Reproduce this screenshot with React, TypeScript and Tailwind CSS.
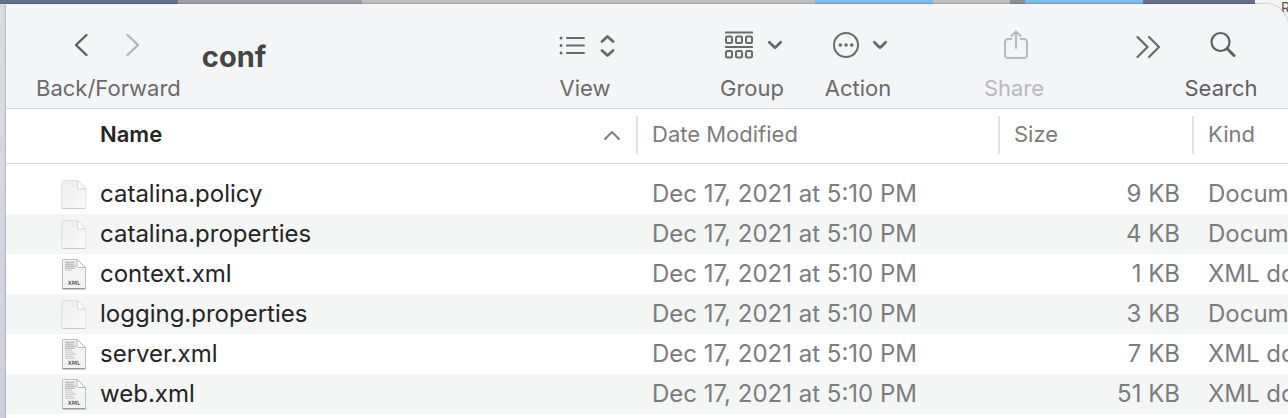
import React, { useState } from 'react';

type FileEntry = {
  name: string;
  size: string;
  type: 'plain' | 'xml';
  lines: number;
};

const files: FileEntry[] = [
  { name: 'catalina.policy', size: '9 KB', type: 'plain', lines: 0 },
  { name: 'catalina.properties', size: '4 KB', type: 'plain', lines: 0 },
  { name: 'context.xml', size: '1 KB', type: 'xml', lines: 5 },
  { name: 'logging.properties', size: '3 KB', type: 'plain', lines: 0 },
  { name: 'server.xml', size: '7 KB', type: 'xml', lines: 9 },
  { name: 'web.xml', size: '51 KB', type: 'xml', lines: 9 },
];

const lineWidths = [10, 9, 11, 10, 7, 9, 11, 8, 10];

function PlainFileIcon() {
  return (
    <svg width="28" height="32" viewBox="0 0 28 32" aria-hidden="true">
      <defs>
        <linearGradient id="plainPage" x1="0" y1="0" x2="1" y2="1">
          <stop offset="0" stopColor="#ececec" />
          <stop offset="1" stopColor="#fafafa" />
        </linearGradient>
      </defs>
      <path d="M3.5 2.5H17.5L26 11V28Q26 30.5 23.5 30.5H3.5Q1.5 30.5 1.5 28.5V4.5Q1.5 2.5 3.5 2.5Z" fill="url(#plainPage)" stroke="#e2e2e2" />
      <path d="M2.5 30.5H25" stroke="#cacaca" />
      <path d="M17.5 2.5V9.5Q17.5 11 19 11H26Z" fill="#fdfdfd" stroke="#d6d6d6" strokeLinejoin="round" />
    </svg>
  );
}

function XmlFileIcon({ lines }: { lines: number }) {
  return (
    <svg width="28" height="32" viewBox="0 0 28 32" aria-hidden="true">
      <path d="M3 1.5H17.5L25.5 9.5V30.5H2.5V2Z" fill="#f4f4f4" stroke="#c0c0c0" />
      <path d="M2.5 30.8H25.5" stroke="#8c8c8c" strokeWidth="1.2" />
      {lineWidths.slice(0, lines).map((width, i) => (
        <path key={i} d={`M5 ${4.2 + i * 2}h${width}`} stroke={i > 3 ? '#d0d0d0' : '#b4b4b4'} strokeWidth="1.2" />
      ))}
      <path d="M17 1.5V8Q17 9.5 18.5 9.5H25.5Z" fill="#fff" stroke="#b8b8b8" strokeLinejoin="round" />
      <text x="14" y="27.3" textAnchor="middle" fontSize="6" fontWeight="500" fontFamily="'DejaVu Sans', sans-serif" fill="#222">
        XML
      </text>
    </svg>
  );
}

function Chevron() {
  return (
    <svg width="16" height="10" viewBox="0 0 16 10" fill="none" stroke="currentColor" strokeWidth="2.8" strokeLinecap="round" strokeLinejoin="round" aria-hidden="true">
      <path d="M2.3 2.3 8 7.8l5.7-5.5" />
    </svg>
  );
}

function ToolbarButton({
  label,
  className,
  disabled,
  children,
}: {
  label: string;
  className: string;
  disabled?: boolean;
  children: React.ReactNode;
}) {
  return (
    <button type="button" disabled={disabled} className={`flex shrink-0 flex-col items-center gap-[11px] ${className}`}>
      <span className="flex h-9 items-center justify-center pl-[3px]">{children}</span>
      <span className="text-[22px] leading-7">{label}</span>
    </button>
  );
}

function Toolbar() {
  return (
    <header className="flex items-start border-b border-[#d9d9d9] bg-[#f4f5f7] pt-[23px] pr-[31px] pb-1.5 pl-[30px] text-[#696a6c]">
      <div className="flex shrink-0 flex-col items-center gap-[11px]">
        <div className="flex h-9 items-center justify-center gap-5 pr-[3px]">
          <button type="button" aria-label="Back" className="flex h-9 w-8 items-center justify-center">
            <svg width="16" height="26" viewBox="0 0 16 26" fill="none" stroke="#5c5d5f" strokeWidth="2.4" strokeLinecap="round" strokeLinejoin="round">
              <path d="M13.5 3 3 13l10.5 10" />
            </svg>
          </button>
          <button type="button" aria-label="Forward" disabled className="flex h-9 w-8 items-center justify-center">
            <svg width="16" height="26" viewBox="0 0 16 26" fill="none" stroke="#b4b5b7" strokeWidth="2.4" strokeLinecap="round" strokeLinejoin="round">
              <path d="M2.5 3 13 13 2.5 23" />
            </svg>
          </button>
        </div>
        <span className="text-[22px] leading-7">Back/Forward</span>
      </div>

      <h1 className="min-w-0 flex-1 truncate pt-2.5 pl-[21px] text-[29px] leading-10 font-bold text-[#454545]">conf</h1>

      <ToolbarButton label="View" className="w-20">
        <svg width="58" height="26" viewBox="0 0 58 26" fill="none" stroke="currentColor" strokeLinecap="round" strokeLinejoin="round" aria-hidden="true">
          <path d="M9 6h17M9 13.5h17M9 21h17" strokeWidth="2" />
          <path d="M3 6h.01M3 13.5h.01M3 21h.01" strokeWidth="3" />
          <path d="M44 9.5 49.5 4.5 55 9.5M44 18.5l5.500 5 5.500-5" strokeWidth="2.8" />
        </svg>
      </ToolbarButton>

      <ToolbarButton label="Group" className="ml-[87px] w-20">
        <span className="flex items-center gap-3.5">
          <svg width="28" height="30" viewBox="0 0 28 30" fill="none" stroke="currentColor" strokeWidth="2" aria-hidden="true">
            <path d="M0.500 2.500h27M0.500 17h27" strokeWidth="1.8" strokeLinecap="round" />
            <rect x="1" y="6.500" width="6" height="6.500" rx="1.500" />
            <rect x="11" y="6.500" width="6" height="6.500" rx="1.500" />
            <rect x="21" y="6.500" width="6" height="6.500" rx="1.500" />
            <rect x="1" y="21" width="6" height="6.500" rx="1.500" />
            <rect x="11" y="21" width="6" height="6.500" rx="1.500" />
            <rect x="21" y="21" width="6" height="6.500" rx="1.500" />
          </svg>
          <Chevron />
        </span>
      </ToolbarButton>

      <ToolbarButton label="Action" className="ml-[26px] w-20">
        <span className="flex items-center gap-3">
          <svg width="28" height="28" viewBox="0 0 28 28" fill="none" stroke="currentColor" aria-hidden="true">
            <circle cx="14" cy="14" r="12" strokeWidth="2" />
            <path d="M8.3 14h.01M14 14h.01M19.7 14h.01" strokeWidth="3.6" strokeLinecap="round" />
          </svg>
          <Chevron />
        </span>
      </ToolbarButton>

      <ToolbarButton label="Share" disabled className="ml-[76px] w-20 text-[#b9babc]">
        <svg width="26" height="32" viewBox="0 0 26 32" fill="none" stroke="currentColor" strokeWidth="2" strokeLinecap="round" strokeLinejoin="round" aria-hidden="true">
          <path d="M8.5 10H5Q2 10 2 13v13q0 3 3 3h16q3 0 3-3V13q0-3-3-3h-3.5" />
          <path d="M13 19V3M8.5 7 13 2.5l4.5 4.5" />
        </svg>
      </ToolbarButton>

      <button type="button" aria-label="More toolbar items" className="ml-[73px] flex h-10 w-10 shrink-0 items-center justify-center pl-0.5">
        <svg width="26" height="26" viewBox="0 0 26 26" fill="none" stroke="currentColor" strokeWidth="2.2" strokeLinecap="round" strokeLinejoin="round">
          <path d="M2.5 3 12.5 13 2.5 23M14 3l10 10-10 10" />
        </svg>
      </button>

      <ToolbarButton label="Search" className="ml-[18px] w-[72px] text-[#5f6062]">
        <svg width="28" height="28" viewBox="0 0 28 28" fill="none" stroke="currentColor" strokeLinecap="round" aria-hidden="true">
          <circle cx="11.5" cy="11" r="9" strokeWidth="2.2" />
          <path d="m18.5 18 6.5 6.5" strokeWidth="3" />
        </svg>
      </ToolbarButton>
    </header>
  );
}

function HeaderCell({ label }: { label: string }) {
  return (
    <th scope="col" className="p-0 pt-[7px] pb-[9px] text-left align-top font-normal">
      <div className="-ml-px flex h-[38px] items-center border-l-2 border-[#e2e2e2] pb-0.5 pl-3.5">{label}</div>
    </th>
  );
}

function FileTable() {
  const [ascending, setAscending] = useState(true);
  const sorted = ascending ? files : [...files].reverse();

  return (
    <table className="w-full table-fixed border-collapse text-[#7b7c7d]">
      <colgroup>
        <col />
        <col className="w-[362px]" />
        <col className="w-[194px]" />
        <col className="w-[95px]" />
      </colgroup>
      <thead>
        <tr className="border-b border-[#d9d9d9] text-[22px]">
          <th scope="col" aria-sort={ascending ? 'ascending' : 'descending'} className="p-0 pt-[7px] pb-[9px] align-top">
            <button
              type="button"
              onClick={() => setAscending(!ascending)}
              className="flex h-[38px] w-full items-center justify-between pr-4 pb-0.5 pl-[94px] font-semibold text-[#242424]"
            >
              Name
              <svg width="18" height="12" viewBox="0 0 18 12" fill="none" stroke="#7b7b7b" strokeWidth="1.8" strokeLinecap="round" strokeLinejoin="round" className={ascending ? '' : 'rotate-180'} aria-hidden="true">
                <path d="M2 11 9 4l7 7" />
              </svg>
            </button>
          </th>
          <HeaderCell label="Date Modified" />
          <HeaderCell label="Size" />
          <HeaderCell label="Kind" />
        </tr>
      </thead>
      <tbody className="text-2xl before:block before:h-2.5">
        {sorted.map((file) => (
          <tr key={file.name} className="h-10 even:bg-[#f4f5f5]">
            <td className="p-0 pl-[54px]">
              <div className="flex items-center gap-3 leading-8 text-[#242424]">
                {file.type === 'xml' ? <XmlFileIcon lines={file.lines} /> : <PlainFileIcon />}
                {file.name}
              </div>
            </td>
            <td className="p-0 pl-[15px] leading-8 whitespace-nowrap">Dec 17, 2021 at 5:10 PM</td>
            <td className="p-0 pr-[13px] text-right leading-8 whitespace-nowrap">{file.size}</td>
            <td className="overflow-hidden p-0 pl-[15px] leading-8 whitespace-nowrap">
              {file.type === 'xml' ? 'XML document' : 'Document'}
            </td>
          </tr>
        ))}
      </tbody>
    </table>
  );
}

// Sliver of the desktop that shows above and beside the window
function Desktop() {
  return (
    <div className="absolute inset-x-0 top-0 flex h-1" aria-hidden="true">
      <div className="flex-[178] bg-[#61708f]" />
      <div className="flex-[184] bg-[#a09ea6]" />
      <div className="flex-[453] bg-[#c1c1c1]" />
      <div className="flex-[118] bg-[#7abde8]" />
      <div className="flex-[77] bg-[#c1c1c1]" />
      <div className="flex-[15] bg-[#908f97]" />
      <div className="flex-[118] bg-[#7abde8]" />
      <div className="flex-[112] bg-[#666e8b]" />
      <div className="flex h-6 flex-[33] justify-end overflow-hidden bg-[#f5f5f5]">
        <span className="w-[7px] text-[14px] leading-4 text-[#555]">R</span>
      </div>
    </div>
  );
}

export default function App() {
  return (
    <div className="relative h-screen overflow-hidden bg-linear-to-b from-[#d8dce0] to-[#cdd1df] pt-1 pl-1.5 font-['Inter','Liberation_Sans',sans-serif]">
      <Desktop />
      <main className="relative h-full overflow-hidden rounded-tr-[22px] bg-white shadow-[0_0_2px_rgba(0,0,0,0.5)]">
        <Toolbar />
        <FileTable />
      </main>
    </div>
  );
}
